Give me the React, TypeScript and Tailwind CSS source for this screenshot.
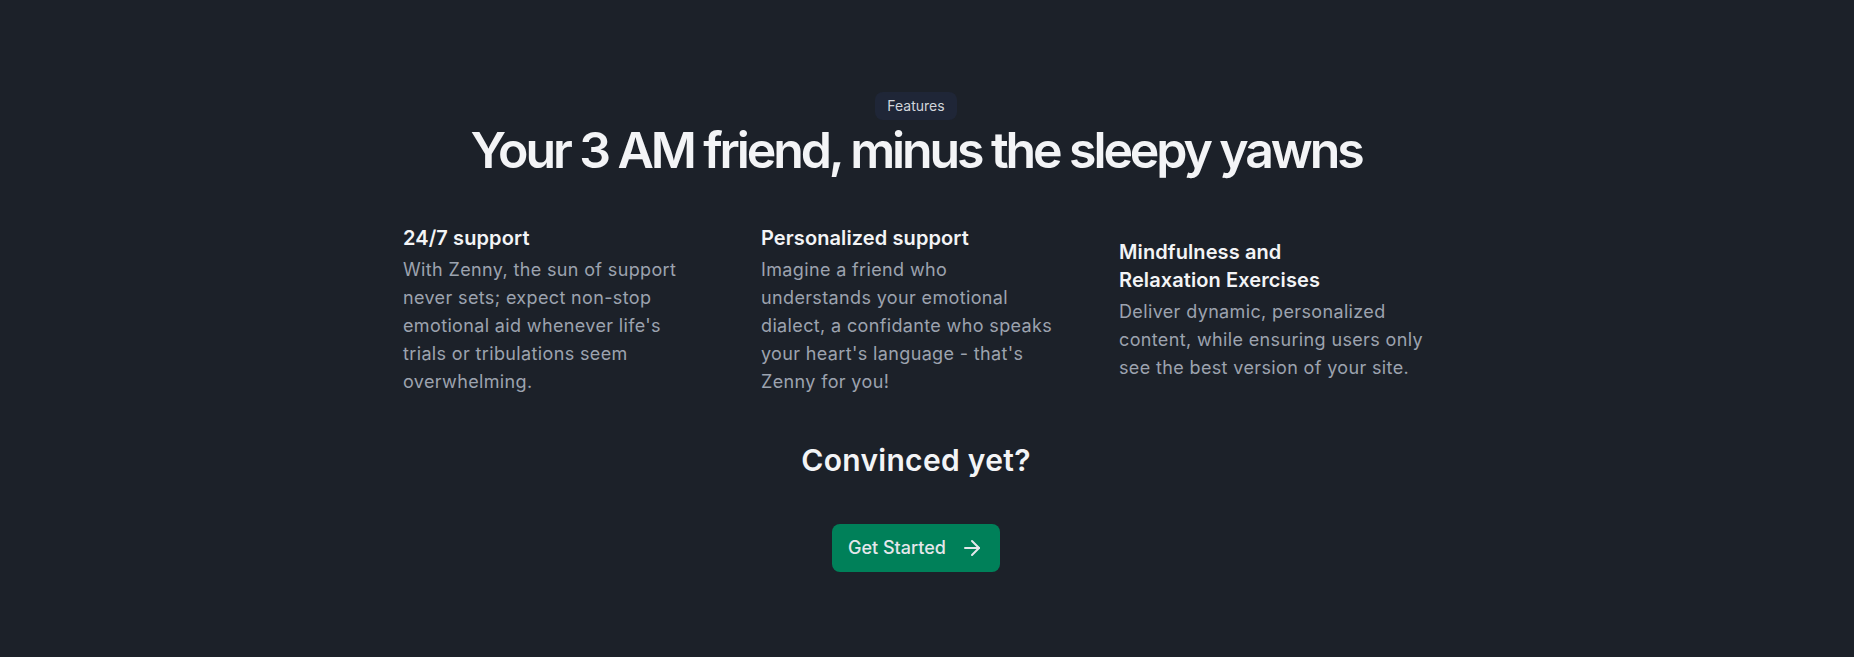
import { ArrowRight } from 'lucide-react';

type Feature = {
  title: string[];
  body: string[];
};

const features: Feature[] = [
  {
    title: ['24/7 support'],
    body: [
      'With Zenny, the sun of support',
      'never sets; expect non-stop',
      "emotional aid whenever life's",
      'trials or tribulations seem',
      'overwhelming.',
    ],
  },
  {
    title: ['Personalized support'],
    body: [
      'Imagine a friend who',
      'understands your emotional',
      'dialect, a confidante who speaks',
      "your heart's language - that's",
      'Zenny for you!',
    ],
  },
  {
    title: ['Mindfulness and', 'Relaxation Exercises'],
    body: [
      'Deliver dynamic, personalized',
      'content, while ensuring users only',
      'see the best version of your site.',
    ],
  },
];

const Lines = ({ lines }: { lines: string[] }) => (
  <>
    {lines.map((l, i) => (
      <span key={i} className="block whitespace-nowrap">
        {l}
      </span>
    ))}
  </>
);

const FeatureCard = ({ feature }: { feature: Feature }) => (
  <div>
    <h3 className="text-xl leading-7 font-semibold text-[#f3f4f6] mb-1 tracking-[0.005em]">
      <Lines lines={feature.title} />
    </h3>
    <p className="text-lg leading-7 text-[#9ca3af] tracking-[0.02em]">
      <Lines lines={feature.body} />
    </p>
  </div>
);

export default function App() {
  return (
    <div className="min-h-screen bg-[#1c2129] font-['Inter','Liberation_Sans',sans-serif]">
      <div className="flex flex-col items-center pt-[92px] pb-[85px] pr-[22px]">
        <span className="rounded-lg bg-[#1f2637] px-3 py-1 text-sm leading-5 text-[#d1d5db]">
          Features
        </span>

        <h2 className="mt-[5px] text-[50px] leading-none font-semibold tracking-[-0.062em] text-[#f3f4f6]">
          Your 3 AM friend, minus the sleepy yawns
        </h2>

        <div className="mt-[49px] grid w-[1026px] grid-cols-3 items-center gap-x-12">
          {features.map((f) => (
            <FeatureCard key={f.title[0]} feature={f} />
          ))}
        </div>

        <h3 className="mt-[46px] text-3xl leading-9 font-semibold tracking-[0.01em] text-[#f3f4f6]">
          Convinced yet?
        </h3>

        <button className="mt-[46px] flex items-center gap-3.5 rounded-lg bg-[#008059] py-2.5 pl-4 pr-4 text-lg leading-7 font-medium text-[#e5e7eb]">
          Get Started
          <ArrowRight size={24} strokeWidth={2} />
        </button>
      </div>
    </div>
  );
}
